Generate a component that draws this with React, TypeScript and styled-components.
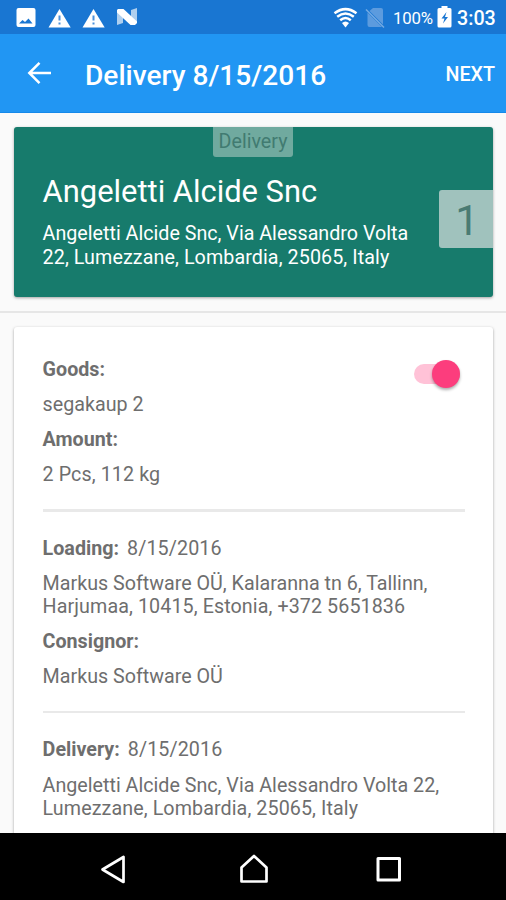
import React from "react";
import styled, { createGlobalStyle } from "styled-components";

const GlobalStyle = createGlobalStyle`
  * { box-sizing: border-box; }
  body { margin: 0; background: #fafafa; font-family: Roboto, "Liberation Sans", sans-serif; }
`;

const Screen = styled.div`
  width: 506px;
  height: 900px;
  display: flex;
  flex-direction: column;
  overflow: hidden;
  background: #fafafa;
`;

const StatusBar = styled.header`
  height: 34px;
  flex: none;
  display: flex;
  justify-content: space-between;
  background: #1976d2;
  color: #fff;
`;

const StatusIcons = styled.svg`
  display: block;
  flex: none;
`;

const StatusInfo = styled.div`
  display: flex;
  align-items: center;
  padding-right: 11px;
`;

const Battery = styled.span`
  width: 40px;
  margin: 2px 4px 0 8px;
  font-size: 16.8px;
  line-height: 20px;
  letter-spacing: -0.2px;
  white-space: nowrap;
`;

const Clock = styled.span`
  width: 38px;
  margin: 3px 0 0 5px;
  font-size: 19.7px;
  font-weight: 500;
  line-height: 24px;
  white-space: nowrap;
`;

const Toolbar = styled.div`
  height: 79px;
  flex: none;
  display: flex;
  align-items: center;
  padding: 0 11px 0 27px;
  background: #2196f3;
  border-bottom: 1px solid #1589ea;
  color: #fff;
`;

const BackButton = styled.button`
  display: flex;
  width: 58px;
  padding: 0;
  border: 0;
  background: none;
`;

const Title = styled.h1`
  flex: 1;
  margin: 5px 0 0;
  font-size: 28.1px;
  line-height: 34px;
  font-weight: 500;
  white-space: nowrap;
`;

const NextButton = styled.button`
  margin-top: 4px;
  padding: 0;
  border: 0;
  background: none;
  color: #fff;
  font: 500 19.7px/24px Roboto, sans-serif;
`;

const CardArea = styled.section`
  flex: none;
  height: 200px;
  padding: 14px 13px 0 14px;
  border-bottom: 2px solid #e6e6e6;
`;

const StopCard = styled.article`
  position: relative;
  height: 170px;
  padding: 46px 28px 0 28.6px;
  border-radius: 3px;
  background: #177b6c;
  color: #fff;
  box-shadow: 0 1px 3px rgba(0, 0, 0, 0.35);
`;

const TypeBadge = styled.span`
  position: absolute;
  top: 0;
  left: 199px;
  width: 80px;
  height: 30px;
  border-radius: 0 0 3px 3px;
  background: #70aa9f;
  color: #417b71;
  font-size: 19.7px;
  line-height: 30px;
  text-align: center;
`;

const OrderBadge = styled.span`
  position: absolute;
  top: 63px;
  right: 0;
  width: 54px;
  height: 58px;
  padding-left: 2px;
  border-radius: 3px 0 0 3px;
  background: #a0c2bd;
  color: #4a7b73;
  font-size: 42.2px;
  line-height: 61px;
  text-align: center;
`;

const StopName = styled.h2`
  margin: 0;
  font-size: 30.9px;
  line-height: 37px;
  font-weight: 400;
  white-space: nowrap;
`;

const StopAddress = styled.p`
  margin: 12.4px 0 0;
  font-size: 19.7px;
  line-height: 23.3px;
  white-space: nowrap;
`;

const DetailsArea = styled.main`
  flex: 1;
  min-height: 0;
  padding: 14px 13px 0 14px;
  overflow: hidden;
`;

const DetailsCard = styled.article`
  height: 560px;
  padding: 31px 28px 0 28.6px;
  border-radius: 3px;
  background: #fff;
  box-shadow: 0 1px 3px rgba(0, 0, 0, 0.36);
`;

const Section = styled.section<{ $rule?: number }>`
  position: relative;
  padding-bottom: ${(p) => (p.$rule === 2 ? 23 : 22)}px;
  margin-bottom: 25px;
  border-bottom: ${(p) => p.$rule ?? 0}px solid #e9e9e9;
`;

const Text = styled.p<{ $strong?: boolean }>`
  margin: 0 0 11.8px;
  color: #6e6e6e;
  font-size: 19.7px;
  line-height: 23.3px;
  font-weight: ${(p) => (p.$strong ? 700 : 400)};
  white-space: nowrap;
  &:last-of-type { margin-bottom: 0; }
`;

const Tracked = styled.span`
  letter-spacing: 0.09px;
`;

const DateText = styled.span`
  margin-left: 8px;
  font-weight: 400;
  letter-spacing: 0.1px;
`;

const Toggle = styled.button`
  position: absolute;
  top: 6px;
  right: 5px;
  width: 46px;
  height: 20px;
  padding: 0;
  border: 0;
  border-radius: 10px;
  background: #ffc2d7;
`;

const ToggleThumb = styled.span`
  position: absolute;
  top: -4px;
  right: 0;
  width: 28px;
  height: 28px;
  border-radius: 50%;
  background: #fc3d7d;
  box-shadow: 0 2px 3px rgba(0, 0, 0, 0.32);
`;

const NavBar = styled.nav`
  height: 67px;
  flex: none;
  display: flex;
  background: #000;
`;

function NotificationIcons() {
  return (
    <StatusIcons width="145" height="34" viewBox="0 0 145 34" fill="#fff">
      <path fillRule="evenodd" d="M18.5 8h15a2 2 0 0 1 2 2v15a2 2 0 0 1-2 2h-15a2 2 0 0 1-2-2V10a2 2 0 0 1 2-2ZM19 23.5h13.500l-4-5-3.500 3.500-2.500-2Z" />
      {[0, 34].map((x) => (
        <g key={x} transform={`translate(${x} 0)`}>
          <path d="M59.5 9 70.7 27.5H48.5Z" />
          <path d="M58.5 15.5h2v5h-2Zm0 7h2v2h-2Z" fill="#4b91db" />
        </g>
      ))}
      <path d="m117 11 6-2v14l-6 2Zm14-1 6-2v15l-6 2Z" opacity=".65" />
      <path d="M118 9h5.500L137 21.500V23l-2 2h-4.500L117 12.500V10Z" />
    </StatusIcons>
  );
}

function WifiIcon() {
  return (
    <StatusIcons width="26" height="34" viewBox="333 0 26 34" fill="none" stroke="#fff" strokeWidth="2.500">
      <path d="M335.500 13.300q11-8.400 22 0M338.200 16.700q8.300-6.500 16.600 0M341.200 20.300q5.300-4.500 10.600 0" />
      <path d="M343 23q3.500-3 7 0l-3.500 4.500Z" fill="#fff" stroke="none" />
    </StatusIcons>
  );
}

function NoSimIcon() {
  return (
    <StatusIcons width="20" height="34" viewBox="366 0 20 34">
      <path d="M374 8h8q2 0 2 2v14.500L370.500 11ZM368.500 12.500 383 27h-12.500q-2 0-2-2Z" fill="#5c9bde" />
      <path d="m367 9.500 18 18" stroke="#75abe3" strokeWidth="1.500" />
    </StatusIcons>
  );
}

function BatteryIcon() {
  return (
    <StatusIcons width="15" height="34" viewBox="437 0 15 34">
      <path d="M441.500 8V6h6v2h2.500q1.500 0 1.500 1.500V26q0 1.500-1.500 1.500h-11q-1.500 0-1.500-1.500V9.500Q437.500 8 439 8Z" fill="#fff" />
      <path d="m446.500 12-5 6.500h3l-1.500 5 5-6.500h-3Z" fill="#1976d2" />
    </StatusIcons>
  );
}

export default function App() {
  return (
    <>
      <GlobalStyle />
      <Screen>
        <StatusBar>
          <NotificationIcons />
          <StatusInfo>
            <WifiIcon />
            <StatusIcons width="7" height="34" />
            <NoSimIcon />
            <Battery>100%</Battery>
            <BatteryIcon />
            <Clock>3:03</Clock>
          </StatusInfo>
        </StatusBar>
        <Toolbar>
          <BackButton aria-label="Back">
            <svg width="25" height="24" viewBox="0 0 25 24" fill="none" stroke="#fff" strokeWidth="2.500">
              <path d="M24 12H3M12.500 1.800 2.300 12l10.200 10.200" />
            </svg>
          </BackButton>
          <Title>Delivery 8/15/2016</Title>
          <NextButton>NEXT</NextButton>
        </Toolbar>
        <CardArea>
          <StopCard>
            <TypeBadge>Delivery</TypeBadge>
            <StopName>Angeletti Alcide Snc</StopName>
            <StopAddress>
              Angeletti Alcide Snc, Via Alessandro Volta
              <br />
              <Tracked>22, Lumezzane, Lombardia, 25065, Italy</Tracked>
            </StopAddress>
            <OrderBadge>1</OrderBadge>
          </StopCard>
        </CardArea>
        <DetailsArea>
          <DetailsCard>
            <Section $rule={3}>
              <Toggle role="switch" aria-checked="true" aria-label="Goods">
                <ToggleThumb />
              </Toggle>
              <Text $strong>Goods:</Text>
              <Text>segakaup 2</Text>
              <Text $strong>Amount:</Text>
              <Text>
                <Tracked>2 Pcs, 112 kg</Tracked>
              </Text>
            </Section>
            <Section $rule={2}>
              <Text $strong>
                Loading:<DateText>8/15/2016</DateText>
              </Text>
              <Text>
                Markus Software OÜ, Kalaranna tn 6, Tallinn,
                <br />
                <Tracked>Harjumaa, 10415, Estonia, +372 5651836</Tracked>
              </Text>
              <Text $strong>Consignor:</Text>
              <Text>Markus Software OÜ</Text>
            </Section>
            <Section>
              <Text $strong>
                Delivery:<DateText>8/15/2016</DateText>
              </Text>
              <Text>
                Angeletti Alcide Snc, Via Alessandro Volta 22,
                <br />
                <Tracked>Lumezzane, Lombardia, 25065, Italy</Tracked>
              </Text>
            </Section>
          </DetailsCard>
        </DetailsArea>
        <NavBar>
          <svg width="506" height="67" viewBox="0 833 506 67" fill="none" stroke="#fff" strokeWidth="2.700" strokeLinejoin="round">
            <path d="M123.500 857v25L102.500 869.500Z" />
            <path d="M241.500 881.500V867.500L254 856l12.500 11.500v14Z" />
            <rect x="378" y="858.500" width="21.500" height="21.500" strokeWidth="3" />
          </svg>
        </NavBar>
      </Screen>
    </>
  );
}
